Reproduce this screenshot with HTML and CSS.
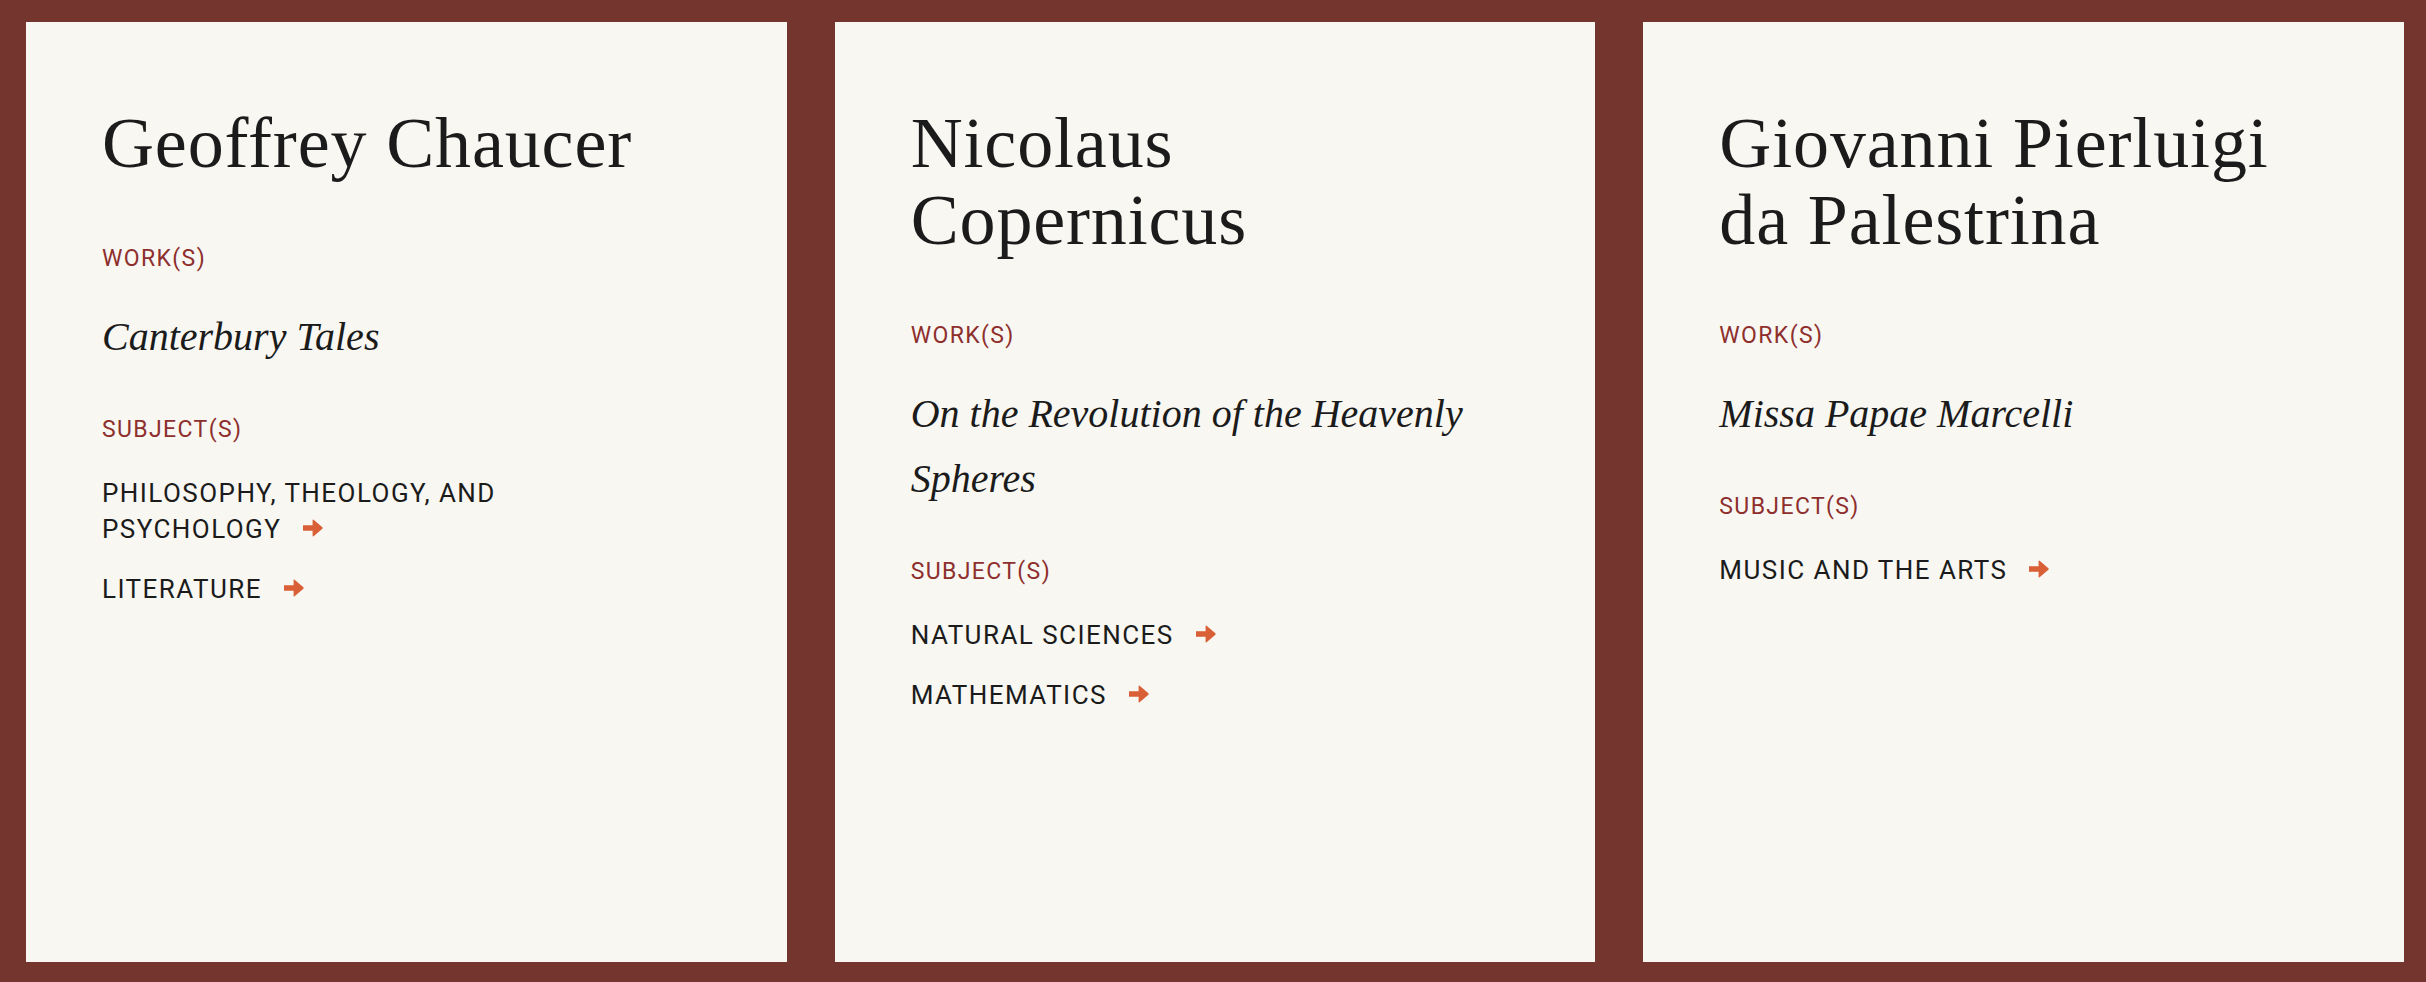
FILE: index.html
```html
<!DOCTYPE html>
<html lang="en">
<head>
<meta charset="utf-8">
<title>Thinkers</title>
<link rel="stylesheet" href="styles.css">
</head>
<body>
<main class="grid">
  <article class="card">
    <h2 class="name">Geoffrey Chaucer</h2>
    <p class="label">Work(s)</p>
    <p class="work">Canterbury Tales</p>
    <p class="label">Subject(s)</p>
    <ul class="subjects">
      <li><a class="subject" href="#">Philosophy, Theology, and <span class="last">Psychology<svg class="arrow" viewBox="0 0 20 18" aria-hidden="true"><path d="M0 6.2 H9.6 V1.2 Q9.6 0 10.6 0.8 L19.4 8.2 Q20 9 19.4 9.8 L10.6 17.2 Q9.6 18 9.6 16.8 V11.8 H0 Z"/></svg></span></a></li>
      <li><a class="subject" href="#"><span class="last">Literature<svg class="arrow" viewBox="0 0 20 18" aria-hidden="true"><path d="M0 6.2 H9.6 V1.2 Q9.6 0 10.6 0.8 L19.4 8.2 Q20 9 19.4 9.8 L10.6 17.2 Q9.6 18 9.6 16.8 V11.8 H0 Z"/></svg></span></a></li>
    </ul>
  </article>
  <article class="card">
    <h2 class="name">Nicolaus Copernicus</h2>
    <p class="label">Work(s)</p>
    <p class="work">On the Revolution of the Heavenly Spheres</p>
    <p class="label">Subject(s)</p>
    <ul class="subjects">
      <li><a class="subject" href="#">Natural <span class="last">Sciences<svg class="arrow" viewBox="0 0 20 18" aria-hidden="true"><path d="M0 6.2 H9.6 V1.2 Q9.6 0 10.6 0.8 L19.4 8.2 Q20 9 19.4 9.8 L10.6 17.2 Q9.6 18 9.6 16.8 V11.8 H0 Z"/></svg></span></a></li>
      <li><a class="subject" href="#"><span class="last">Mathematics<svg class="arrow" viewBox="0 0 20 18" aria-hidden="true"><path d="M0 6.2 H9.6 V1.2 Q9.6 0 10.6 0.8 L19.4 8.2 Q20 9 19.4 9.8 L10.6 17.2 Q9.6 18 9.6 16.8 V11.8 H0 Z"/></svg></span></a></li>
    </ul>
  </article>
  <article class="card">
    <h2 class="name">Giovanni Pierluigi da Palestrina</h2>
    <p class="label">Work(s)</p>
    <p class="work">Missa Papae Marcelli</p>
    <p class="label">Subject(s)</p>
    <ul class="subjects">
      <li><a class="subject" href="#">Music and the <span class="last">Arts<svg class="arrow" viewBox="0 0 20 18" aria-hidden="true"><path d="M0 6.2 H9.6 V1.2 Q9.6 0 10.6 0.8 L19.4 8.2 Q20 9 19.4 9.8 L10.6 17.2 Q9.6 18 9.6 16.8 V11.8 H0 Z"/></svg></span></a></li>
    </ul>
  </article>
</main>
</body>
</html>
```

FILE: styles.css
```css
* {
  box-sizing: border-box;
}

html, body {
  margin: 0;
  padding: 0;
}

body {
  background: #74352e;
  color: #1b1b1b;
  font-family: "Liberation Serif", "Times New Roman", serif;
}

.grid {
  display: grid;
  grid-template-columns: repeat(3, 1fr);
  gap: 48px;
  height: 100vh;
  padding: 22px 22px 20px 26px;
}

.card {
  background: #f8f7f2;
  padding: 83px 100px 40px 76px;
  display: flex;
  flex-direction: column;
  align-items: flex-start;
}

.name {
  margin: 0 0 62px;
  font-family: "Liberation Serif", "Times New Roman", serif;
  font-weight: 400;
  font-size: 72px;
  line-height: 77px;
  letter-spacing: 0.85px;
  color: #1b1b1b;
}

.label {
  margin: 0 0 30px;
  font-family: Roboto, "Liberation Sans", sans-serif;
  font-size: 23px;
  line-height: 30px;
  letter-spacing: 0.06em;
  text-transform: uppercase;
  color: #8e2f2d;
}

.work {
  margin: 0 0 46px;
  font-family: "Liberation Serif", "Times New Roman", serif;
  font-style: italic;
  font-size: 40px;
  line-height: 65px;
  color: #1b1b1b;
}

.subjects {
  list-style: none;
  margin: 0;
  padding: 0;
  display: flex;
  flex-direction: column;
  gap: 24px;
}

.subject {
  font-family: Roboto, "Liberation Sans", sans-serif;
  font-size: 26px;
  line-height: 36px;
  letter-spacing: 1.45px;
  text-transform: uppercase;
  color: #1b1b1b;
  text-decoration: none;
}

.last {
  white-space: nowrap;
}

.arrow {
  width: 20px;
  height: 18px;
  margin-left: 22px;
  vertical-align: 1px;
  fill: #d95f36;
}
```
